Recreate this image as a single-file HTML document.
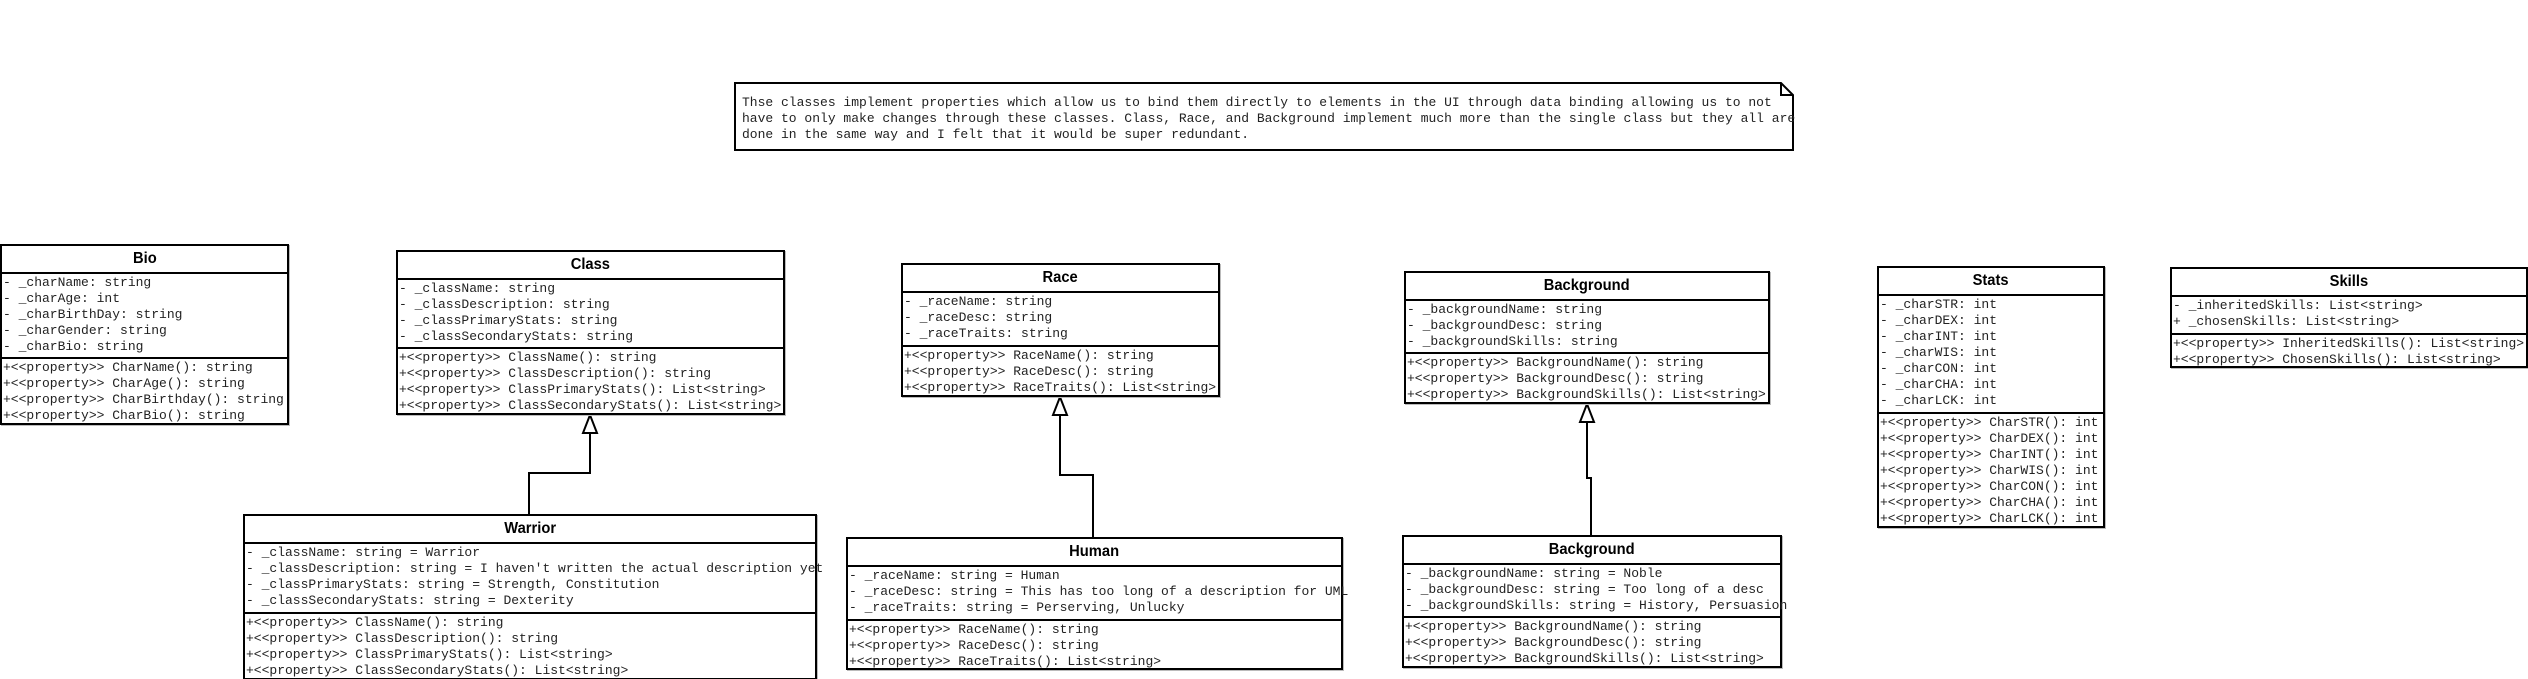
<!DOCTYPE html>
<html><head><meta charset="utf-8"><style>
html,body{margin:0;padding:0;background:#fff;width:2528px;height:679px;overflow:hidden;position:relative}
.b{position:absolute;border:2px solid #000;background:#fff;box-sizing:border-box;box-shadow:1px 1px 0 #bbb}
.t{font:bold 16px "Liberation Sans",sans-serif;text-align:center;border-bottom:2px solid #000;box-sizing:border-box;line-height:26px;height:28px}
.t span{display:inline-block;transform:scaleX(0.92)}
.c{font:13px/16px "Liberation Mono",monospace;white-space:pre;padding:1px 0 0 1px;color:#222;box-sizing:border-box}
.c+.c{border-top:2px solid #000}
.n{position:absolute;font:13px/16px "Liberation Mono",monospace;white-space:pre;color:#222}
</style></head><body>
<svg width="2528" height="679" style="position:absolute;left:0;top:0">
<g fill="#fff" stroke="#000" stroke-width="2">
<polygon points="735,83 1781,83 1793,95 1793,150 735,150"/>
<polyline points="1781,83 1781,95 1793,95" fill="none"/>
<polyline points="590,433 590,473 529,473 529,514" fill="none"/>
<polygon points="590,415 583,433 597,433"/>
<polyline points="1060,415 1060,475 1093,475 1093,537" fill="none"/>
<polygon points="1060,397 1053,415 1067,415"/>
<polyline points="1587,422 1587,478 1591,478 1591,535" fill="none"/>
<polygon points="1587,404 1580,422 1594,422"/>
</g></svg>
<div class="n" style="left:742px;top:95px">Thse classes implement properties which allow us to bind them directly to elements in the UI through data binding allowing us to not
have to only make changes through these classes. Class, Race, and Background implement much more than the single class but they all are
done in the same way and I felt that it would be super redundant.</div>

<div class="b" style="left:0;top:244px;width:289px;height:181px"><div class="t"><span>Bio</span></div>
<div class="c" style="height:83px">- _charName: string
- _charAge: int
- _charBirthDay: string
- _charGender: string
- _charBio: string</div>
<div class="c">+&lt;&lt;property&gt;&gt; CharName(): string
+&lt;&lt;property&gt;&gt; CharAge(): string
+&lt;&lt;property&gt;&gt; CharBirthday(): string
+&lt;&lt;property&gt;&gt; CharBio(): string</div></div>

<div class="b" style="left:396px;top:250px;width:389px;height:165px"><div class="t"><span>Class</span></div>
<div class="c" style="height:67px">- _className: string
- _classDescription: string
- _classPrimaryStats: string
- _classSecondaryStats: string</div>
<div class="c">+&lt;&lt;property&gt;&gt; ClassName(): string
+&lt;&lt;property&gt;&gt; ClassDescription(): string
+&lt;&lt;property&gt;&gt; ClassPrimaryStats(): List&lt;string&gt;
+&lt;&lt;property&gt;&gt; ClassSecondaryStats(): List&lt;string&gt;</div></div>

<div class="b" style="left:243px;top:514px;width:574px;height:166px"><div class="t"><span>Warrior</span></div>
<div class="c" style="height:68px">- _className: string = Warrior
- _classDescription: string = I haven't written the actual description yet
- _classPrimaryStats: string = Strength, Constitution
- _classSecondaryStats: string = Dexterity</div>
<div class="c">+&lt;&lt;property&gt;&gt; ClassName(): string
+&lt;&lt;property&gt;&gt; ClassDescription(): string
+&lt;&lt;property&gt;&gt; ClassPrimaryStats(): List&lt;string&gt;
+&lt;&lt;property&gt;&gt; ClassSecondaryStats(): List&lt;string&gt;</div></div>

<div class="b" style="left:901px;top:263px;width:319px;height:134px"><div class="t"><span>Race</span></div>
<div class="c" style="height:52px">- _raceName: string
- _raceDesc: string
- _raceTraits: string</div>
<div class="c">+&lt;&lt;property&gt;&gt; RaceName(): string
+&lt;&lt;property&gt;&gt; RaceDesc(): string
+&lt;&lt;property&gt;&gt; RaceTraits(): List&lt;string&gt;</div></div>

<div class="b" style="left:846px;top:537px;width:497px;height:133px"><div class="t"><span>Human</span></div>
<div class="c" style="height:52px">- _raceName: string = Human
- _raceDesc: string = This has too long of a description for UML
- _raceTraits: string = Perserving, Unlucky</div>
<div class="c">+&lt;&lt;property&gt;&gt; RaceName(): string
+&lt;&lt;property&gt;&gt; RaceDesc(): string
+&lt;&lt;property&gt;&gt; RaceTraits(): List&lt;string&gt;</div></div>

<div class="b" style="left:1404px;top:271px;width:366px;height:133px"><div class="t"><span>Background</span></div>
<div class="c" style="height:51px">- _backgroundName: string
- _backgroundDesc: string
- _backgroundSkills: string</div>
<div class="c">+&lt;&lt;property&gt;&gt; BackgroundName(): string
+&lt;&lt;property&gt;&gt; BackgroundDesc(): string
+&lt;&lt;property&gt;&gt; BackgroundSkills(): List&lt;string&gt;</div></div>

<div class="b" style="left:1402px;top:535px;width:380px;height:133px"><div class="t"><span>Background</span></div>
<div class="c" style="height:51px">- _backgroundName: string = Noble
- _backgroundDesc: string = Too long of a desc
- _backgroundSkills: string = History, Persuasion</div>
<div class="c">+&lt;&lt;property&gt;&gt; BackgroundName(): string
+&lt;&lt;property&gt;&gt; BackgroundDesc(): string
+&lt;&lt;property&gt;&gt; BackgroundSkills(): List&lt;string&gt;</div></div>

<div class="b" style="left:1877px;top:266px;width:228px;height:262px;overflow:hidden"><div class="t"><span>Stats</span></div>
<div class="c" style="height:116px">- _charSTR: int
- _charDEX: int
- _charINT: int
- _charWIS: int
- _charCON: int
- _charCHA: int
- _charLCK: int</div>
<div class="c">+&lt;&lt;property&gt;&gt; CharSTR(): int
+&lt;&lt;property&gt;&gt; CharDEX(): int
+&lt;&lt;property&gt;&gt; CharINT(): int
+&lt;&lt;property&gt;&gt; CharWIS(): int
+&lt;&lt;property&gt;&gt; CharCON(): int
+&lt;&lt;property&gt;&gt; CharCHA(): int
+&lt;&lt;property&gt;&gt; CharLCK(): int</div></div>

<div class="b" style="left:2170px;top:267px;width:358px;height:101px;overflow:hidden"><div class="t"><span>Skills</span></div>
<div class="c" style="height:36px">- _inheritedSkills: List&lt;string&gt;
+ _chosenSkills: List&lt;string&gt;</div>
<div class="c">+&lt;&lt;property&gt;&gt; InheritedSkills(): List&lt;string&gt;
+&lt;&lt;property&gt;&gt; ChosenSkills(): List&lt;string&gt;</div></div>
</body></html>
